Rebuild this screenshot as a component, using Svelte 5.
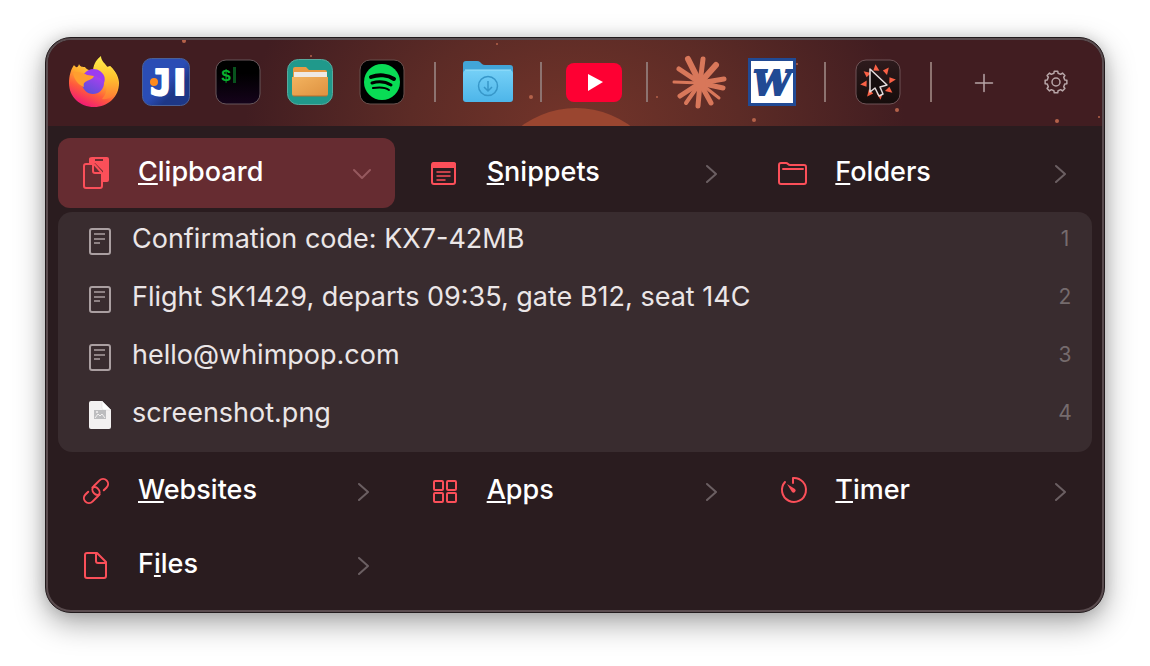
<script>
  const dock = [
    { id: 'firefox', label: 'Firefox' },
    { id: 'idea', label: 'IntelliJ IDEA' },
    { id: 'terminal', label: 'Terminal' },
    { id: 'files', label: 'File manager' },
    { id: 'spotify', label: 'Spotify' },
    null,
    { id: 'downloads', label: 'Downloads' },
    null,
    { id: 'youtube', label: 'YouTube' },
    null,
    { id: 'burst', label: 'Claude' },
    { id: 'word', label: 'Word' },
    null,
    { id: 'whimpop', label: 'WhimPop' },
    null,
    { id: 'add', label: 'Add shortcut' },
    { id: 'settings', label: 'Settings' }
  ];

  // key is the index of the underlined shortcut letter
  const sections = [
    { id: 'clipboard', label: 'Clipboard', key: 0 },
    { id: 'snippets', label: 'Snippets', key: 0 },
    { id: 'folders', label: 'Folders', key: 0 },
    { id: 'websites', label: 'Websites', key: 0 },
    { id: 'apps', label: 'Apps', key: 0 },
    { id: 'timer', label: 'Timer', key: 0 },
    { id: 'documents', label: 'Files', key: 1 }
  ];

  const clips = [
    { type: 'text', text: 'Confirmation code: KX7-42MB' },
    { type: 'text', text: 'Flight SK1429, departs 09:35, gate B12, seat 14C' },
    { type: 'text', text: 'hello@whimpop.com' },
    { type: 'image', text: 'screenshot.png' }
  ];

  const stars = [
    [136, 1, 2], [263, 16, 1], [449, 4, 1], [483, 57, 2], [609, 57, 1],
    [706, 80, 2], [749, 24, 1], [849, 70, 2], [1009, 81, 2], [1051, 77, 1]
  ];

  const rays = [
    [16, 5, 6], [31, 5, 5], [44, 11, 6], [52, 25, 5], [51, 34, 5], [47, 44, 3],
    [39, 49, 5], [26, 52, 5], [14, 49, 4], [8, 42, 5], [2, 28, 3], [7, 15, 5]
  ];

  const sparks = [-8, 37, 82, 127, 172, 217, 262, 307];

  let open = $state('clipboard');

  function toggle(id) {
    open = open === id ? null : id;
  }

  function gearPath(teeth, outer, inner) {
    const points = [];
    const step = (Math.PI * 2) / teeth;
    for (let i = 0; i < teeth; i++) {
      const a = i * step - Math.PI / 2;
      for (const [offset, r] of [[-0.3, inner], [-0.2, outer], [0.2, outer], [0.3, inner]]) {
        const x = 28 + r * Math.cos(a + offset * step);
        const y = 28 + r * Math.sin(a + offset * step);
        points.push(`${x.toFixed(2)} ${y.toFixed(2)}`);
      }
    }
    return `M${points.join('L')}Z`;
  }
</script>

{#snippet dockIcon(id)}
  <svg class="dock-icon" viewBox="0 0 56 56" aria-hidden="true">
    {#if id === 'firefox'}
      <defs>
        <linearGradient id="fox-body" x1="0.8" y1="0.1" x2="0.3" y2="1">
          <stop offset="0" stop-color="#ffe14a" />
          <stop offset="0.35" stop-color="#ffab2e" />
          <stop offset="0.65" stop-color="#ff5a3c" />
          <stop offset="1" stop-color="#f0157a" />
        </linearGradient>
        <linearGradient id="fox-flame" x1="0" y1="0" x2="0" y2="1">
          <stop offset="0" stop-color="#fff04e" />
          <stop offset="0.5" stop-color="#ffc22e" />
          <stop offset="1" stop-color="#ff7a35" />
        </linearGradient>
        <linearGradient id="fox-globe" x1="0.8" y1="0" x2="0.3" y2="1">
          <stop offset="0" stop-color="#b73df5" />
          <stop offset="1" stop-color="#5c4fd6" />
        </linearGradient>
      </defs>
      <path d="M8 11C10 14 12 14 13 10C14 13 17 13 19 13C20 15 24 17 28 17L44 12C51 18 53 25 53 29C53 43 42 53 28 53C14 53 3 43 3 29C3 22 5 15 8 11Z" fill="url(#fox-body)" />
      <path d="M27 16C28 9 31 5 35 2C35 7 39 9 43 15L44 12C51 19 54 28 51 36C48 43 42 46 36 45C42 39 42 29 38 24C35 19 31 17 27 16Z" fill="url(#fox-flame)" />
      <circle cx="27" cy="29" r="11" fill="url(#fox-globe)" />
      <path d="M18 20C22 14 30 14 34 17C38 20 40 24 38 29C35 24 31 22 27 22Z" fill="#9c3cf0" />
      <path d="M7 19C13 17 18 20 21 21L28 22C27 25 23 26 21 27C18 28 17 30 18 33C12 31 8 25 7 19Z" fill="#ff9e2f" />
    {:else if id === 'idea'}
      <defs>
        <linearGradient id="idea-bg" x1="0" y1="0" x2="1" y2="1">
          <stop offset="0.5" stop-color="#2a4db5" />
          <stop offset="0.7" stop-color="#1d3787" />
        </linearGradient>
      </defs>
      <rect x="4.500" y="4.500" width="47" height="47" rx="9" fill="url(#idea-bg)" stroke="#4a6097" />
      <g class="idea-text">
        <text x="12" y="41" font-size="36" font-family="DejaVu Sans Mono">J</text>
        <text x="35" y="41" font-size="36" font-family="DejaVu Sans">I</text>
      </g>
      <circle cx="16" cy="28" r="4" fill="#ff8a1e" />
    {:else if id === 'terminal'}
      <defs>
        <linearGradient id="term-bg" x1="0" y1="0" x2="0" y2="1">
          <stop offset="0.3" stop-color="#000" />
          <stop offset="1" stop-color="#15031b" />
        </linearGradient>
      </defs>
      <rect x="6" y="6" width="44" height="44" rx="10" fill="url(#term-bg)" stroke="#67575b" />
      <text x="11" y="27" font-size="17" font-family="Liberation Mono" font-weight="700" fill="#08b32f">$</text>
      <rect x="23" y="13" width="3" height="16" fill="#08531d" />
    {:else if id === 'files'}
      <defs>
        <linearGradient id="files-front" x1="0" y1="0" x2="1" y2="1">
          <stop offset="0" stop-color="#f3b35f" />
          <stop offset="1" stop-color="#dd9140" />
        </linearGradient>
      </defs>
      <rect x="5.500" y="5.500" width="45" height="45" rx="11" fill="#20998b" stroke="#58a99d" />
      <path d="M11 15Q11 13 13 13H24L27 16H43Q45 16 45 18V26H11Z" fill="#e99a43" />
      <rect x="12" y="18" width="33" height="12" fill="#eee9e4" />
      <path d="M10 23H46V40Q46 42 44 42H12Q10 42 10 40Z" fill="url(#files-front)" />
      <path d="M11 42H45" stroke="#b66d2c" />
    {:else if id === 'spotify'}
      <rect x="6" y="6" width="44" height="44" rx="10" fill="#000" stroke="#67504d" />
      <circle cx="28" cy="28" r="18" fill="#09dc55" />
      <g fill="none" stroke="#000" stroke-linecap="round">
        <path d="M17 23C25 20 34 21 40 25" stroke-width="4" />
        <path d="M18 29C25 27 32 28 37 31" stroke-width="3" />
        <path d="M19 34C25 33 31 33 35 36" stroke-width="2" />
      </g>
    {:else if id === 'downloads'}
      <defs>
        <linearGradient id="dl-front" x1="0" y1="0" x2="0" y2="1">
          <stop offset="0" stop-color="#75d0f7" />
          <stop offset="1" stop-color="#4db5e9" />
        </linearGradient>
      </defs>
      <path d="M3 10Q3 7 6 7H17Q19 7 20 8L22 10Q23 11 25 11H50Q53 11 53 14V30H3Z" fill="#42a5d8" />
      <path d="M3 20Q3 16 7 16H49Q53 16 53 20V45Q53 48 50 48H6Q3 48 3 45Z" fill="url(#dl-front)" />
      <path d="M5 16H51" stroke="#9be1fb" />
      <g fill="none" stroke="#3797c9" stroke-width="1.500">
        <circle cx="28" cy="32" r="9.500" />
        <path d="M28 27V37M24 33L28 37L32 33" />
      </g>
    {:else if id === 'youtube'}
      <rect x="0" y="9" width="56" height="39" rx="8" fill="#fe0033" />
      <path d="M22 20L37 28L22 37Z" fill="#fff" />
    {:else if id === 'burst'}
      <g stroke="#d8775a" stroke-linecap="round">
        {#each rays as [x, y, width]}
          <line x1="28" y1="29" x2={x} y2={y} stroke-width={width} />
        {/each}
      </g>
      <circle cx="28" cy="29" r="6" fill="#d8775a" />
    {:else if id === 'word'}
      <rect x="5.500" y="5.500" width="45" height="45" fill="#fff" stroke="#214a94" stroke-width="3" />
      <text class="word-text" x="28" y="41" font-size="34" text-anchor="middle">W</text>
    {:else if id === 'whimpop'}
      <defs>
        <linearGradient id="pop-bg" x1="0" y1="0" x2="0" y2="1">
          <stop offset="0" stop-color="#2e1b1d" />
          <stop offset="1" stop-color="#150c0b" />
        </linearGradient>
      </defs>
      <rect x="6" y="6" width="44" height="44" rx="10" fill="url(#pop-bg)" stroke="#6e5356" />
      {#each sparks as angle}
        <path d="M28 10L31 17L25 16Z" fill="#fa6045" transform="rotate({angle} 28 28)" />
      {/each}
      <path d="M20 15V38L25 34L29 42L33 40L30 33L37 31Z" fill="#160e0e" stroke="#e5dcdc" stroke-width="1.500" stroke-linejoin="round" />
    {:else if id === 'add'}
      <path d="M28 20.500V37.500M19.500 29H36.500" stroke="#b7a5a7" stroke-width="1.500" stroke-linecap="round" />
    {:else if id === 'settings'}
      <g fill="none" stroke="#b7a5a7" stroke-width="1.500" stroke-linejoin="round">
        <path d={gearPath(8, 11, 9)} />
        <circle cx="28" cy="28" r="4" />
      </g>
    {/if}
  </svg>
{/snippet}

{#snippet sectionIcon(id)}
  <svg class="section-icon" viewBox="0 0 28 34" aria-hidden="true">
    {#if id === 'clipboard'}
      <path class="solid" fill-rule="evenodd" d="M10 1H25Q27 1 27 3V24Q27 26 25 26H21V15L13 7H7V3Q7 1 10 1ZM13 3V5H21V3Z" />
      <path d="M4 8H12L20 17V30Q20 32 18 32H4Q2 32 2 30V10Q2 8 4 8ZM11 8V15Q11 17 13 17H20" />
    {:else if id === 'snippets'}
      <rect x="1" y="7" width="23" height="21" rx="2" />
      <path class="solid" d="M1 8Q1 6 3 6H22Q25 6 25 8V12H1Z" />
      <path d="M6 16H19M6 20H19M6 24H14" class="thin" />
    {:else if id === 'folders'}
      <path d="M0 9Q0 7 2 7H7Q8 7 9 8Q10 9 11 9H25Q27 9 27 11V26Q27 28 25 28H2Q0 28 0 26ZM4 13H24" />
    {:else if id === 'websites'}
      <g transform="translate(14 17) rotate(-45)">
        <path d="M-6 -5H-10A5 5 0 0 0 -10 5H-2A5 5 0 0 0 3 0A5 5 0 0 0 0 -5" />
        <path d="M6 5H10A5 5 0 0 0 10 -5H2A5 5 0 0 0 -3 0A5 5 0 0 0 0 5" />
      </g>
    {:else if id === 'apps'}
      <rect x="3" y="7" width="9" height="9" rx="1" />
      <rect x="16" y="7" width="9" height="9" rx="1" />
      <rect x="3" y="19" width="9" height="9" rx="1" />
      <rect x="16" y="19" width="9" height="9" rx="1" />
    {:else if id === 'timer'}
      <path d="M6 8A12 12 0 1 0 14 4V9" />
      <path class="solid" d="M8 10L16 15A2 2 0 0 1 13 18Z" />
    {:else}
      <path d="M5 5H15L24 14V28Q24 30 22 30H5Q3 30 3 28V7Q3 5 5 5ZM14 5V13Q14 15 16 15H24" />
    {/if}
  </svg>
{/snippet}

{#snippet clipIcon(type)}
  <svg class="clip-icon" viewBox="0 0 24 28" aria-hidden="true">
    {#if type === 'image'}
      <path d="M3 0H14L23 9V26Q23 28 21 28H3Q1 28 1 26V2Q1 0 3 0Z" fill="#f3f1f1" />
      <path d="M14 0V7Q14 9 16 9H23Z" fill="#fff" stroke="#d9d7d7" stroke-width="0.500" />
      <rect x="6" y="9" width="12" height="9" fill="#bdbdbf" />
      <path d="M7 17L10 13L12 15L14 13L17 17" fill="none" stroke="#f3f1f1" />
      <circle cx="9" cy="11" r="1" fill="#f3f1f1" />
    {:else}
      <rect x="2" y="2" width="20" height="25" rx="2" fill="none" stroke="#aa9fa1" stroke-width="2" />
      <path d="M6 7H17M6 12H17M6 16H12" stroke="#aa9fa1" stroke-width="1.500" />
    {/if}
  </svg>
{/snippet}

<main class="panel">
  <header class="dock">
    <svg class="sky" viewBox="0 0 1054 86" preserveAspectRatio="xMidYMax slice" aria-hidden="true">
      <circle cx="528" cy="159" r="91" fill="#9a4630" />
      {#each stars as [x, y, r]}
        <circle cx={x} cy={y} {r} fill="#b5624a" />
      {/each}
    </svg>
    {#each dock as item}
      {#if item}
        <button class="dock-btn" aria-label={item.label}>{@render dockIcon(item.id)}</button>
      {:else}
        <span class="divider"></span>
      {/if}
    {/each}
  </header>

  <div class="grid">
    {#each sections as section, i}
      <button
        class="section"
        class:active={open === section.id}
        aria-expanded={open === section.id}
        onclick={() => toggle(section.id)}
      >
        {@render sectionIcon(section.id)}
        <span class="name">{section.label.slice(0, section.key)}<u>{section.label[section.key]}</u>{section.label.slice(section.key + 1)}</span>
        <svg class="chevron" viewBox="0 0 20 20" aria-hidden="true">
          <path d={open === section.id ? 'M1 7L9 15L17 7' : 'M6 3L15 11L6 19'} />
        </svg>
      </button>
      {#if i === 2 && open === 'clipboard'}
        <ul class="clips">
          {#each clips as clip, n}
            <li>
              <button class="clip">
                {@render clipIcon(clip.type)}
                <span class="clip-text">{clip.text}</span>
                <span class="clip-key">{n + 1}</span>
              </button>
            </li>
          {/each}
        </ul>
      {/if}
    {/each}
  </div>
</main>

<style>
  :global(body) {
    margin: 0;
    background: #fff;
  }

  .panel {
    margin: 37px 45px 53px;
    border: 1px solid #211a1c;
    border-radius: 26px;
    background: #2a1c1f;
    box-shadow: 0 10px 30px rgba(0, 0, 0, 0.36), 0 0 14px rgba(0, 0, 0, 0.12);
    outline: 2px solid #5a4c4f;
    outline-offset: -3px;
    padding: 2px;
    font-family: Inter, "Liberation Sans", sans-serif;
    color: #fff;
  }

  button {
    border: none;
    background: none;
    padding: 0;
    margin: 0;
    font: inherit;
    color: inherit;
    text-align: left;
    cursor: pointer;
  }

  .dock {
    position: relative;
    display: flex;
    align-items: center;
    height: 84px;
    padding: 0 10px 2px;
    border-radius: 23px 23px 0 0;
    overflow: hidden;
    background: radial-gradient(ellipse 330px 220px at 50% 100%, #74352a 0%, #5c2b26 50%, #411d21 100%);
  }

  .sky {
    position: absolute;
    inset: 0;
    width: 100%;
    height: 100%;
  }

  .dock-btn {
    position: relative;
    flex: 1;
    display: flex;
    justify-content: center;
  }

  .dock-icon {
    width: 56px;
    height: 56px;
    overflow: visible;
  }

  .idea-text {
    fill: #fff;
    stroke: #fff;
    stroke-width: 2px;
    stroke-linejoin: round;
    font-weight: 700;
  }

  .word-text {
    font-family: "DejaVu Serif", serif;
    font-weight: 700;
    font-style: italic;
    fill: #214a94;
    stroke: #214a94;
    stroke-width: 2px;
  }

  .divider {
    position: relative;
    width: 2px;
    height: 40px;
    margin: 0 16px;
    background: #8d7370;
  }

  .grid {
    display: grid;
    grid-template-columns: repeat(3, 1fr);
    gap: 4px 12px;
    padding: 12px 10px 10px;
  }

  .section {
    display: flex;
    align-items: center;
    height: 70px;
    padding: 0 22px 0 24px;
    border-radius: 12px;
  }

  .section.active {
    background: #662c31;
  }

  .section-icon {
    width: 28px;
    height: 34px;
    margin-right: 28px;
    overflow: visible;
    fill: none;
    stroke: #fb4f59;
    stroke-width: 2;
    stroke-linecap: round;
    stroke-linejoin: round;
  }

  .section-icon .solid {
    fill: #fb4f59;
    stroke: none;
  }

  .section-icon .thin {
    stroke-width: 1.5;
  }

  .name {
    flex: 1;
    padding-bottom: 2px;
    font-size: 27px;
    font-weight: 500;
    line-height: 32px;
  }

  .name u {
    text-decoration-thickness: 2px;
    text-underline-offset: 2px;
    text-decoration-skip-ink: none;
  }

  .chevron {
    width: 20px;
    height: 20px;
    fill: none;
    stroke: #6b5f62;
    stroke-width: 2;
    stroke-linecap: round;
    stroke-linejoin: round;
  }

  .active .chevron {
    stroke: #96595e;
  }

  .clips {
    grid-column: 1 / -1;
    list-style: none;
    margin: 0;
    padding: 0 0 8px;
    border-radius: 14px;
    background: #392c2f;
  }

  .clip {
    display: flex;
    align-items: center;
    width: 100%;
    height: 58px;
    padding: 0 20px 0 30px;
  }

  .clip-icon {
    width: 24px;
    height: 28px;
    margin-right: 20px;
  }

  .clip-text {
    flex: 1;
    padding-bottom: 4px;
    font-size: 27px;
    line-height: 32px;
    color: #ebe6e7;
  }

  .clip-key {
    min-width: 14px;
    padding-bottom: 4px;
    font-size: 21px;
    line-height: 28px;
    text-align: center;
    color: #756b6d;
  }
</style>
